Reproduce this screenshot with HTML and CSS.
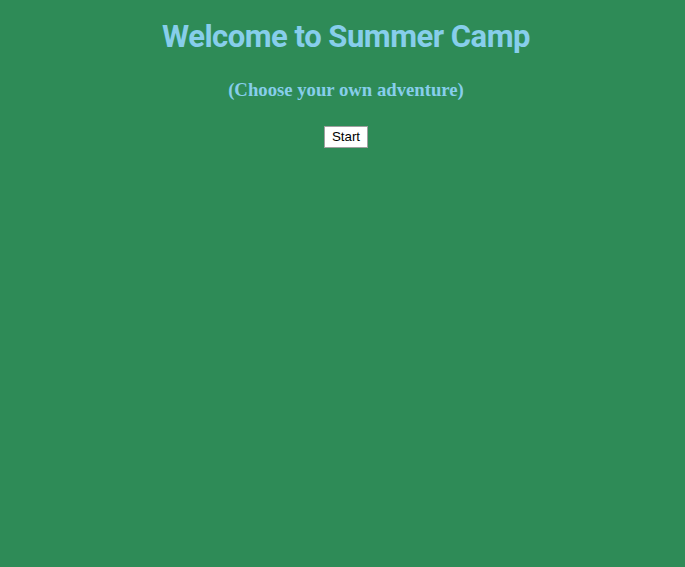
FILE: index.html
```html
<!DOCTYPE html>
<html>
<head>
<meta charset="utf-8">
<link rel="stylesheet" href="styles.css">
</head>
<body>
<div class="page">
  <h1 class="title">Welcome to Summer Camp</h1>
  <h3 class="subtitle">(Choose your own adventure)</h3>
  <button class="start">Start</button>
</div>
</body>
</html>
```
FILE: styles.css
```css
html, body {
  background: #2e8b57;
}
body {
  margin: 8px;
  font-family: "Liberation Serif", serif;
}
.page {
  display: flex;
  flex-direction: column;
  align-items: center;
  padding-left: 7px;
}
.title {
  font-family: Roboto, "DejaVu Sans", sans-serif;
  font-weight: bold;
  font-size: 31px;
  letter-spacing: -0.5px;
  line-height: 36px;
  color: #87ceeb;
  margin: 11px 0 0;
}
.subtitle {
  font-family: "Liberation Serif", serif;
  font-weight: bold;
  font-size: 18.72px;
  line-height: 22px;
  color: #87ceeb;
  margin: 24px 0 0;
}
.start {
  margin-top: 25px;
  font-family: "Liberation Sans", Arial, sans-serif;
  font-size: 13.33px;
  line-height: 16px;
  background: #fff;
  color: #000;
  border: 1px solid #a0a0a0;
  padding: 2px 7px;
}
```
